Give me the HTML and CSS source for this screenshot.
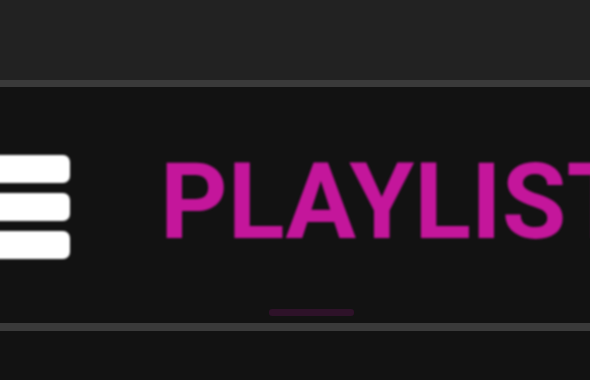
FILE: index.html
```html
<!DOCTYPE html>
<html>
<head>
<meta charset="utf-8">
<link rel="stylesheet" href="styles.css">
</head>
<body>
<div class="topbar"></div>
<div class="divider"></div>
<section class="nav">
  <div class="nav-row">
    <div class="menu">
      <span class="menu-bar"></span>
      <span class="menu-bar"></span>
      <span class="menu-bar"></span>
    </div>
    <h1 class="title">PLAYLIST</h1>
  </div>
  <div class="indicator"></div>
</section>
<div class="divider divider-bottom"></div>
</body>
</html>
```
FILE: styles.css
```css
html, body {
  margin: 0;
  padding: 0;
}
body {
  width: 590px;
  height: 380px;
  overflow: hidden;
  background: #121212;
  font-family: Roboto, "Liberation Sans", sans-serif;
}
.topbar {
  height: 80px;
  background: #222222;
}
.divider {
  height: 7px;
  background: #3a3a3a;
  filter: blur(0.7px);
}
.divider-bottom {
  height: 8px;
}
.nav {
  height: 236px;
  display: flex;
  flex-direction: column;
  box-sizing: border-box;
  padding-top: 63px;
}
.nav-row {
  display: flex;
  align-items: flex-start;
  white-space: nowrap;
}
.menu {
  display: flex;
  flex-direction: column;
  gap: 10px;
  margin-top: 5px;
  margin-left: -20px;
  filter: blur(0.8px);
}
.menu-bar {
  display: block;
  width: 90px;
  height: 28px;
  border-radius: 7px;
  background: #ffffff;
}
.title {
  margin: 0 0 0 90px;
  font-size: 105px;
  line-height: 105px;
  font-weight: 700;
  color: #c4169b;
  filter: blur(0.8px);
}
.indicator {
  margin: 50px 0 0 269px;
  width: 85px;
  height: 7px;
  border-radius: 3px;
  background: #2e1229;
  filter: blur(0.6px);
}
```
